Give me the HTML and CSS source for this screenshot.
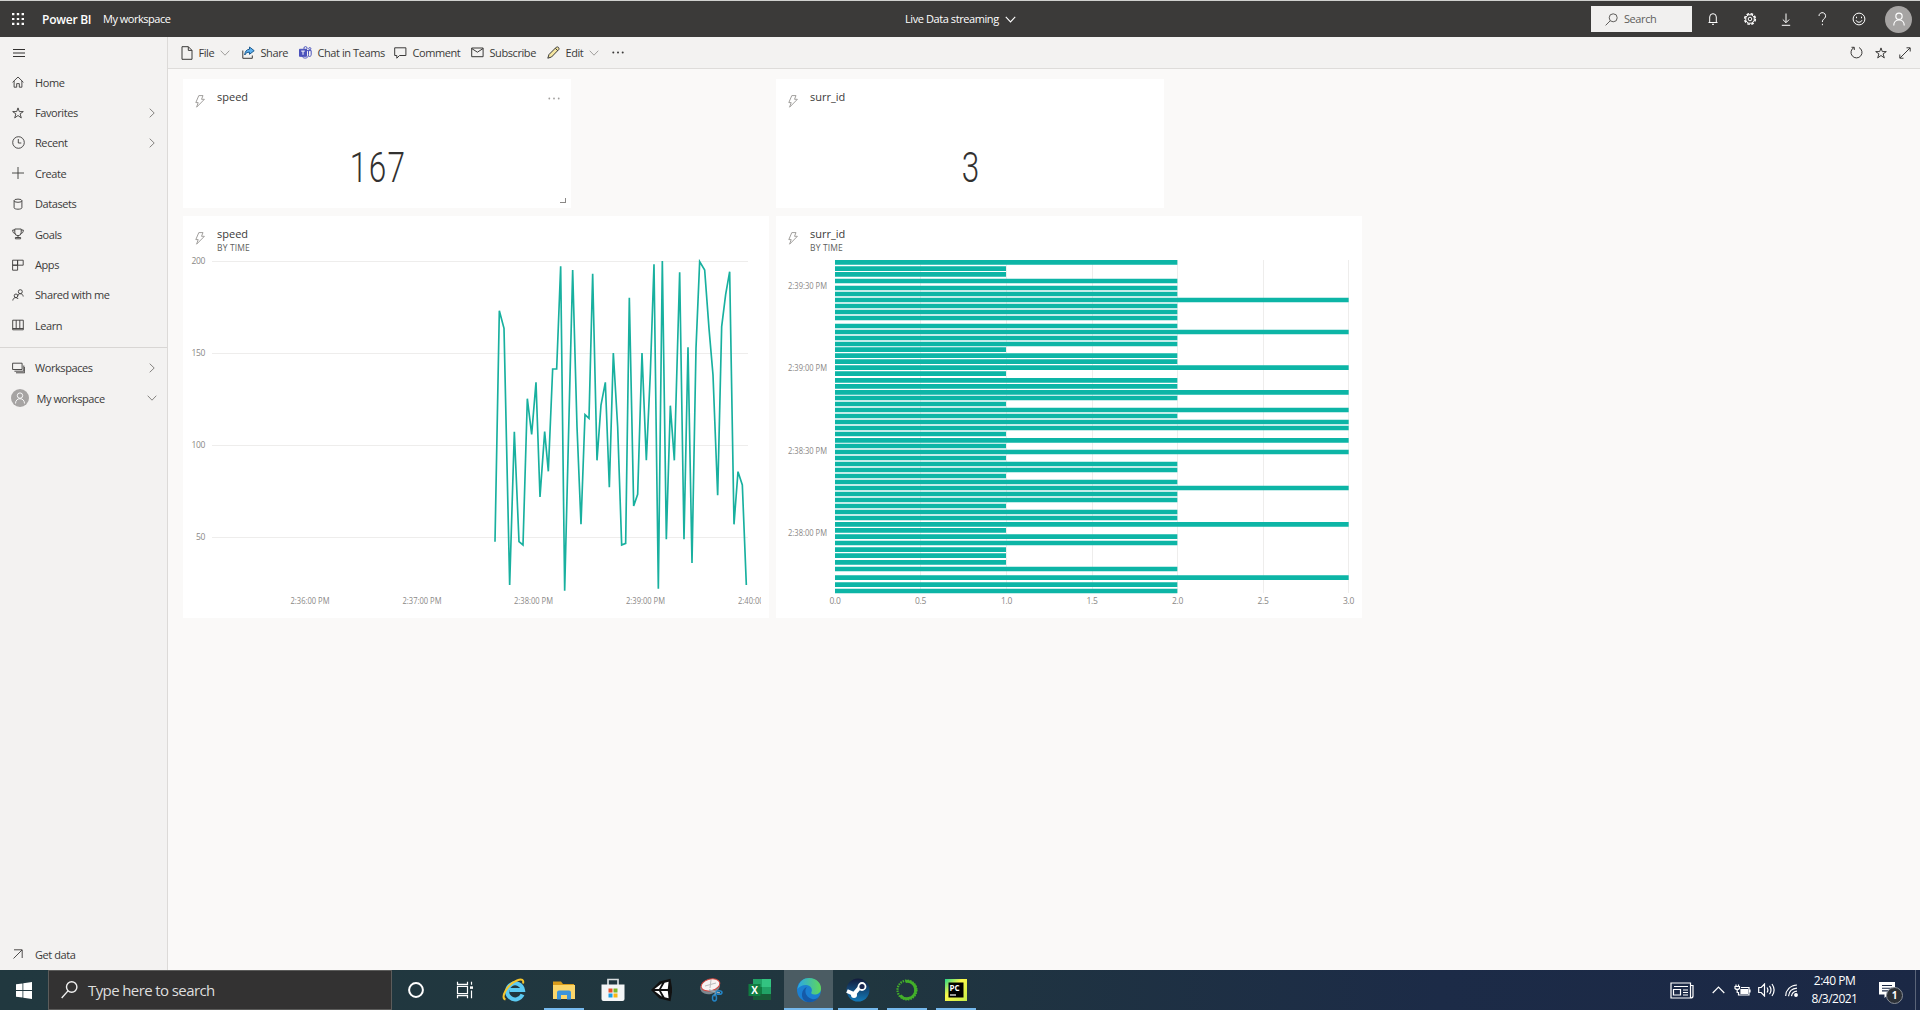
FILE: index.html
```html
<!DOCTYPE html>
<html lang="en">
<head>
<meta charset="utf-8">
<title>Live Data streaming - Power BI</title>
<link rel="stylesheet" href="styles.css">
</head>
<body>
<svg class="defs" width="0" height="0">
  <symbol id="chev-r" viewBox="0 0 6 10"><path d="M.7.7 5.2 5 .7 9.3"/></symbol>
  <symbol id="chev-d" viewBox="0 0 10 6"><path d="M.7.7 5 5.2 9.3.7"/></symbol>
  <symbol id="star" viewBox="0 0 12 12"><path d="M6 .9 7.3 4.6h4L8.100 6.900 9.300 10.900 6 8.500 2.700 10.900 3.900 6.900.7 4.600h4z"/></symbol>
  <symbol id="bolt" viewBox="0 0 10 13"><path d="M3.800.6h4.200L6.500 4.300h2.900L1.600 12.200 3.200 7.600H.8z"/></symbol>
  <symbol id="person" viewBox="0 0 12 12"><circle cx="6" cy="3.600" r="2.700"/><path d="M1.500 11.500c0-3 2-4.800 4.500-4.800s4.500 1.800 4.500 4.800"/></symbol>
</svg>
<div class="app">
  <header class="top">
    <svg class="waffle" width="12" height="12" viewBox="0 0 12 12"><path d="M0 1.200h12M0 6h12M0 10.800h12"/></svg>
    <b class="brand">Power BI</b>
    <span class="crumb">My workspace</span>
    <div class="title"><span>Live Data streaming</span><svg class="ic" width="11" height="7"><use href="#chev-d"/></svg></div>
    <div class="search"><svg class="ic" width="13" height="13" viewBox="0 0 13 13"><circle cx="8.200" cy="4.800" r="4"/><path d="M5.300 7.700.6 12.400"/></svg><span>Search</span></div>
    <div class="actions">
      <svg class="ic" width="12" height="14" viewBox="0 0 12 14"><path d="M1.500 10.500h9M2.700 10.500V5a3.300 3.300 0 0 1 6.600 0v5.500M5 12.300h2"/></svg>
      <svg class="ic" width="14" height="14" viewBox="0 0 14 14"><circle cx="7" cy="7" r="5.300" stroke-width="1.600" stroke-dasharray="2.600 1.560"/><circle cx="7" cy="7" r="4.300"/><circle cx="7" cy="7" r="1.800"/></svg>
      <svg class="ic" width="10" height="13" viewBox="0 0 10 13"><path d="M5 .5v9M1.800 6.500 5 9.700 8.200 6.500M.8 12.300h8.400"/></svg>
      <svg class="ic" width="9" height="14" viewBox="0 0 9 14"><path d="M1 4a3.300 3.300 0 1 1 5.600 2.300C5 7.600 4.400 8.200 4.400 10M4.400 11.800v1.400"/></svg>
      <svg class="ic" width="14" height="14" viewBox="0 0 14 14"><circle cx="7" cy="7" r="5.900"/><path d="M4 8.200a3.200 3.200 0 0 0 6 0M4.500 4.700v1.500M9.500 4.700v1.500"/></svg>
    </div>
    <div class="avatar big"><svg class="ic" width="14" height="14"><use href="#person"/></svg></div>
  </header>
  <div class="body">
    <nav class="side">
      <svg class="burger" width="12" height="8" viewBox="0 0 12 8"><path d="M0 .5h12M0 4h12M0 7.500h12"/></svg>
      <ul>
        <li><svg class="ic" width="12" height="12" viewBox="0 0 12 12"><path d="M.6 6.300 6 1l5.400 5.300M2.100 5v6.200h2.600V7.600h2.600v3.600h2.600V5"/></svg><span>Home</span></li>
        <li><svg class="ic" width="12" height="12"><use href="#star"/></svg><span>Favorites</span><svg class="ic go" width="6" height="10"><use href="#chev-r"/></svg></li>
        <li><svg class="ic" width="13" height="13" viewBox="0 0 13 13"><circle cx="6.500" cy="6.500" r="5.800"/><path d="M6.300 3v4h3"/></svg><span>Recent</span><svg class="ic go" width="6" height="10"><use href="#chev-r"/></svg></li>
        <li><svg class="ic" width="12" height="12" viewBox="0 0 12 12"><path d="M0 6h12M6 0v12"/></svg><span>Create</span></li>
        <li><svg class="ic" width="12" height="12" viewBox="0 0 12 12"><ellipse cx="6" cy="2.700" rx="3.900" ry="1.600"/><path d="M2.100 2.700v7c0 2 7.800 2 7.800 0v-7"/></svg><span>Datasets</span></li>
        <li><svg class="ic" width="12" height="12" viewBox="0 0 12 12"><path d="M2.800 1h6.400v3.500a3.200 3.200 0 0 1-6.400 0zM2.800 2H.7c0 2.500.8 3.200 2.400 3.400M9.200 2h2.100c0 2.500-.8 3.200-2.400 3.400M6 7.700v2M3.400 10.800V9.500h5.200v1.300z"/></svg><span>Goals</span></li>
        <li><svg class="ic" width="12" height="12" viewBox="0 0 12 12"><path d="M.6 1.200h5v5h-5zM5.600 1.200h5.600v5H5.600zM.6 6.200h5v5h-5z"/></svg><span>Apps</span></li>
        <li><svg class="ic" width="12" height="12" viewBox="0 0 12 12"><circle cx="8.300" cy="2.700" r="2"/><path d="M5.700 7.200c.2-1.700 1-2.500 2.600-2.500s2.700 1 2.900 2.800"/><circle cx="4" cy="6.800" r="1.800"/><path d="M.8 11.500c.3-2 1.400-2.900 3-2.900 1 0 1.900.5 2.400 1.400"/></svg><span>Shared with me</span></li>
        <li><svg class="ic" width="12" height="12" viewBox="0 0 12 12"><path d="M.7 1.200h10.600v9.600H.7zM4.200 1.200v8.300M7.800 1.200v8.300M.7 9.500h10.600"/></svg><span>Learn</span></li>
      </ul>
      <ul class="ws">
        <li><svg class="ic" width="13" height="12" viewBox="0 0 13 12"><path d="M.6 1.200h9.500v6.300H.6zM2.400 9.200h9.400V3.500M4 10.800h8.700V5"/></svg><span>Workspaces</span><svg class="ic go" width="6" height="10"><use href="#chev-r"/></svg></li>
        <li class="mine"><div class="avatar"><svg class="ic" width="12" height="12"><use href="#person"/></svg></div><span>My workspace</span><svg class="ic go" width="10" height="6"><use href="#chev-d"/></svg></li>
      </ul>
      <div class="getdata"><svg class="ic" width="10" height="10" viewBox="0 0 10 10"><path d="M.5 9.500 9 1M1 .8h8.200V9"/></svg><span>Get data</span></div>
    </nav>
    <main>
      <div class="toolbar">
        <div class="cmd w-file"><svg class="ic" width="12" height="14" viewBox="0 0 12 14"><path d="M1 .7h6.300L11 4.400v8.900H1zM7.300.7v3.700H11"/></svg><span>File</span><svg class="ic dim" width="10" height="6"><use href="#chev-d"/></svg></div>
        <div class="cmd w-share"><svg class="ic" width="13" height="13" viewBox="0 0 13 13"><path d="M.8 4.500v7.800h9.500V9.500"/><path d="M7.500 1 12.200 4.700 7.500 8.300V6.200C5 6.200 4 7 2.700 9 3 5.500 4.500 3.500 7.500 3.200z" fill="#5fb0ee" stroke="#1b5a8e"/></svg><span>Share</span></div>
        <div class="cmd w-teams"><svg class="ic" width="13" height="13" viewBox="0 0 13 13" stroke="#4b53bc"><circle cx="6.500" cy="2.200" r="1.600"/><circle cx="10.800" cy="2.700" r="1.100"/><path d="M7.500 4.600h4.700v4.200c0 1.500-1.500 1.900-2.300 1.500M3 10c.8 3 6.600 3 6.500-1.300V4.600"/><path d="M.5 3.300h7v7h-7z" fill="#4b53bc"/><path d="M2.200 5.100h3.600M4 5.100v3.700" stroke="#fff"/></svg><span>Chat in Teams</span></div>
        <div class="cmd w-comment"><svg class="ic" width="13" height="12" viewBox="0 0 13 12"><path d="M.7.8h11.200v7.700H5.500l-2.700 2.700V8.500H.7z"/></svg><span>Comment</span></div>
        <div class="cmd w-sub"><svg class="ic" width="13" height="11" viewBox="0 0 13 11"><path d="M.7 1h11.400v8.700H.7zM.7 1.500l5.700 3.700 5.700-3.700"/></svg><span>Subscribe</span></div>
        <div class="cmd w-edit"><svg class="ic" width="13" height="13" viewBox="0 0 13 13"><path d="M.8 12.200 2 8.500 9.300 1.200c1.700-1 3.300.8 2.500 2.300L4.500 11z" fill="#f5e6a0"/><path d="M8.300 2.300 10.800 4.700"/></svg><span>Edit</span><svg class="ic dim" width="10" height="6"><use href="#chev-d"/></svg></div>
        <svg class="more" width="12" height="3" viewBox="0 0 12 3"><circle cx="1.300" cy="1.500" r="1"/><circle cx="6" cy="1.500" r="1"/><circle cx="10.700" cy="1.500" r="1"/></svg>
        <div class="view">
          <svg class="ic" width="13" height="13" viewBox="0 0 13 13"><path d="M4 1.500A5.500 5.500 0 1 0 9 1.500M1.500 1.300h2.800V4"/></svg>
          <svg class="ic" width="12" height="12"><use href="#star"/></svg>
          <svg class="ic" width="12" height="12" viewBox="0 0 12 12"><path d="M1 11 11 1M7.500.8h3.700v3.700M.8 7.500v3.700h3.700"/></svg>
        </div>
      </div>
      <div class="board">
        <section class="tile card">
          <div class="head"><svg class="bolt" width="10" height="13"><use href="#bolt"/></svg><div><h2>speed</h2></div>
            <svg class="dots" width="12" height="3" viewBox="0 0 12 3"><circle cx="1.300" cy="1.500" r=".9"/><circle cx="6" cy="1.500" r=".9"/><circle cx="10.700" cy="1.500" r=".9"/></svg></div>
          <div class="big-number">167</div>
          <i class="grip"></i>
        </section>
        <section class="tile card">
          <div class="head"><svg class="bolt" width="10" height="13"><use href="#bolt"/></svg><div><h2>surr_id</h2></div></div>
          <div class="big-number">3</div>
        </section>
        <section class="tile chart">
          <div class="head"><svg class="bolt" width="10" height="13"><use href="#bolt"/></svg><div><h2>speed</h2><h3>BY TIME</h3></div></div>
          <svg class="plot" width="586" height="361" viewBox="183 257 586 361">
            <path class="grid" d="M212 261.500H748M212 353.500H748M212 445.500H748M212 537.500H748"/>
            <g class="axis">
              <text x="191.500" y="264" textLength="13.500">200</text><text x="191.500" y="356" textLength="13.500">150</text><text x="191.500" y="448" textLength="13.500">100</text><text x="196" y="540" textLength="9">50</text>
            </g>
            <g class="axis time">
              <text x="290.500" y="604" textLength="39" lengthAdjust="spacingAndGlyphs">2:36:00 PM</text><text x="402.500" y="604" textLength="39" lengthAdjust="spacingAndGlyphs">2:37:00 PM</text><text x="514" y="604" textLength="39" lengthAdjust="spacingAndGlyphs">2:38:00 PM</text><text x="626" y="604" textLength="39" lengthAdjust="spacingAndGlyphs">2:39:00 PM</text>
              <svg x="738" y="590" width="23" height="20"><text x="0" y="14" textLength="39" lengthAdjust="spacingAndGlyphs">2:40:00 PM</text></svg>
            </g>
            <polyline class="line" transform="translate(480 240) scale(.33333)" points="45,905 58,212 72,265 89,1035 103,575 117,905 129,915 142,476 155,583 168,427 180,771 194,575 205,694 218,387 230,387 242,79 254,1052 278,90 291,560 303,853 315,524 327,535 338,101 351,661 363,495 376,427 388,742 400,339 413,560 425,915 437,910 448,173 461,798 473,763 486,339 499,661 511,400 522,73 535,1046 547,63 559,898 571,497 583,661 599,97 612,898 624,322 636,969 648,325 659,65 674,90 687,265 699,405 713,766 725,260 737,163 749,95 762,853 774,695 787,735 799,1035"/>
          </svg>
        </section>
        <section class="tile chart">
          <div class="head"><svg class="bolt" width="10" height="13"><use href="#bolt"/></svg><div><h2>surr_id</h2><h3>BY TIME</h3></div></div>
          <svg class="plot" width="586" height="361" viewBox="776 257 586 361">
            <path class="grid" d="M920.500 260V593M1006.500 260V593M1092.500 260V593M1177.500 260V593M1263.500 260V593M1348.500 260V593"/>
            <g class="axis time">
              <text x="788" y="289" textLength="39" lengthAdjust="spacingAndGlyphs">2:39:30 PM</text><text x="788" y="371" textLength="39" lengthAdjust="spacingAndGlyphs">2:39:00 PM</text><text x="788" y="454" textLength="39" lengthAdjust="spacingAndGlyphs">2:38:30 PM</text><text x="788" y="536" textLength="39" lengthAdjust="spacingAndGlyphs">2:38:00 PM</text>
            </g>
            <g class="axis" text-anchor="middle">
              <text x="835" y="604">0.0</text><text x="920.500" y="604">0.5</text><text x="1006.500" y="604">1.0</text><text x="1092" y="604">1.5</text><text x="1177.500" y="604">2.0</text><text x="1263" y="604">2.5</text><text x="1348.500" y="604">3.0</text>
            </g>
            <g class="bars" transform="translate(770 250) scale(.33333)">
              <path d="M195 56H708M195 73H708M195 299H708M195 371H708M195 462H708M195 552H708M195 588H708M195 624H708M195 678H708M195 768H708M195 841H708M195 899H708M195 917H708M195 937H708"/>
              <path d="M195 37H1222M195 93H1222M195 114H1222M195 132H1222M195 168H1222M195 186H1222M195 204H1222M195 228H1222M195 264H1222M195 282H1222M195 317H1222M195 335H1222M195 391H1222M195 409H1222M195 444H1222M195 498H1222M195 642H1222M195 660H1222M195 696H1222M195 732H1222M195 750H1222M195 786H1222M195 804H1222M195 860H1222M195 879H1222M195 957H1222M195 1004H1222M195 1023H1222"/>
              <path d="M195 150H1736M195 246H1736M195 353H1736M195 427H1736M195 480H1736M195 516H1736M195 534H1736M195 571H1736M195 606H1736M195 714H1736M195 823H1736M195 983H1736"/>
            </g>
          </svg>
        </section>
      </div>
    </main>
  </div>
  <footer class="taskbar">
    <div class="start"><svg width="16" height="17" viewBox="0 0 16 17" fill="#fff"><path d="M0 2.300 6.500 1.400v6.700H0zM7.300 1.300 16 0v8.100H7.300zM0 8.900h6.500v6.700L0 14.700zM7.300 8.900H16V17l-8.700-1.300z"/></svg></div>
    <div class="find"><svg width="17" height="18" viewBox="0 0 17 18"><circle cx="10.700" cy="6" r="5.200"/><path d="M7 9.900.7 17"/></svg><span>Type here to search</span></div>
    <div class="apps">
      <div class="app-btn"><svg width="18" height="18" viewBox="0 0 18 18"><circle cx="9" cy="9" r="6.900" fill="none" stroke="#fff" stroke-width="2"/></svg></div>
      <div class="app-btn"><svg width="18" height="18" viewBox="0 0 18 18" fill="none" stroke="#fff" stroke-width="1.200"><path d="M1.500.8v2.600h10V.8M1.500 17.200v-2.600h10v2.600M1.500 5.300h10v7.400h-10zM15.500.8v3M15.500 9.500v7.700"/><path d="M14 6.600h3" stroke-width="2.500"/></svg></div>
      <div class="app-btn wide"><svg width="24" height="24" viewBox="0 0 24 24"><path d="M20.500 16.500A8 8 0 1 1 21 12H7.500" fill="none" stroke="#5ccbf3" stroke-width="4"/><path d="M3.500 21.500C-2 20 5 6.500 15 2.500c5-2 7-.5 6 3" fill="none" stroke="#f6c52c" stroke-width="2"/></svg></div>
      <div class="app-btn open"><svg width="24" height="22" viewBox="0 0 24 22"><path d="M1 2.500h8l2 2.500h11v6H1z" fill="#d99c1b"/><path d="M1 6h22v14H1z" fill="#fbd66a"/><path d="M5 20.500v-7q0-2 2-2h10q2 0 2 2v7h-4V16H9v4.500z" fill="#3b94dc"/></svg></div>
      <div class="app-btn"><svg width="24" height="24" viewBox="0 0 24 24"><path d="M7 8V1.500h10V8" fill="none" stroke="#d8dde0" stroke-width="1.700"/><path d="M.5 6.500h23V21q0 2-2 2h-19q-2 0-2-2z" fill="#f4f6f7"/><path d="M7.500 10.500h4v4h-4z" fill="#e8502b"/><path d="M12.500 10.500h4v4h-4z" fill="#7db726"/><path d="M7.500 15.500h4v4h-4z" fill="#1a9fe6"/><path d="M12.500 15.500h4v4h-4z" fill="#f9b713"/></svg></div>
      <div class="app-btn"><svg width="24" height="24" viewBox="0 0 24 24"><path d="M1 12 9.500 3.500 20.500.8l1.500 9v4.400l-1.500 9-11-2.700z" fill="#111"/><path d="m5 11 7.500-5.800-3 5.800zM5 13l7.500 5.800-3-5.800zM11.500 11l3.600-6.200 4-1-.8 7.200zM11.500 13l3.600 6.200 4 1-.8-7.200z" fill="#fff" transform="translate(-.5)"/></svg></div>
      <div class="app-btn"><svg width="24" height="24" viewBox="0 0 24 24"><ellipse cx="11" cy="9" rx="10" ry="7" fill="#7d8890" transform="rotate(-15 11 9)"/><ellipse cx="11.500" cy="7" rx="9.500" ry="5.800" fill="#f7f3f2" stroke="#d5463f" transform="rotate(-15 11 7)"/><path d="m6 8 11-3M12 2l-1 8" stroke="#bbb"/><path d="m10 12 7 2 4 1M18 13l-3 5" stroke="#9eabb3" stroke-width="1.500"/><g fill="none" stroke="#2384c6" stroke-width="1.500"><ellipse cx="20" cy="14.500" rx="3" ry="1.800"/><ellipse cx="15.500" cy="20" rx="2" ry="3"/></g></svg></div>
      <div class="app-btn"><svg width="24" height="24" viewBox="0 0 24 24"><path d="M5 1h9v8H5z" fill="#21a366"/><path d="M14 1h9v8h-9z" fill="#33c481"/><path d="M5 9h9v7H5z" fill="#107c41"/><path d="M14 9h9v7h-9z" fill="#21a366"/><path d="M5 16h18v6H5z" fill="#185c37"/><path d="M.5 6h12v12H.5z" fill="#107c41"/><text x="6.500" y="16" text-anchor="middle" class="glyph xl">X</text></svg></div>
      <div class="app-btn active"><svg width="26" height="26" viewBox="0 0 26 26"><defs><linearGradient id="eg" x1="0" x2="1"><stop stop-color="#2aa7e6"/><stop offset="1" stop-color="#5fd85a"/></linearGradient></defs><circle cx="13" cy="13" r="12" fill="#1b7fd1"/><path d="M1.500 12C3 4 8 1 13 1c8 0 12 5.500 12 10.500 0 4-3 6-6.500 6-2.500 0-4-1-3-2.500C17 12 14.500 8 10 8 6 8 3 10 1.500 12z" fill="url(#eg)"/><path d="M11 10c-3 3-2 10 5 12 3 .8 6-1 7.500-3C20 25 14 26 10 24.600 4 22 5 12 11 10z" fill="#155aa8"/></svg></div>
      <div class="app-btn open"><svg width="24" height="24" viewBox="0 0 24 24"><defs><linearGradient id="sg" y2="1" x2="0"><stop stop-color="#131a3b"/><stop offset="1" stop-color="#1379b8"/></linearGradient></defs><circle cx="12" cy="12" r="11.500" fill="url(#sg)"/><path d="m1 13 7 3 6-7" fill="none" stroke="#fff" stroke-width="4"/><circle cx="8" cy="17" r="3" fill="#fff"/><circle cx="16" cy="8.500" r="3.500" fill="#1c2850" stroke="#fff" stroke-width="1.800"/></svg></div>
      <div class="app-btn running"><svg width="24" height="24" viewBox="0 0 24 24" fill="none" stroke="#43b02a"><circle cx="12" cy="12" r="8.600" stroke-width="2.800" stroke-dasharray="36 18" transform="rotate(-100 12 12)"/><circle cx="12" cy="12" r="9.500" stroke-width="2.200" stroke-dasharray="1.500 1"/></svg></div>
      <div class="app-btn running"><svg width="22" height="22" viewBox="0 0 22 22"><defs><linearGradient id="pg" y2="1"><stop stop-color="#21d789"/><stop offset=".4" stop-color="#fcf84a"/><stop offset="1" stop-color="#c5ec4a"/></linearGradient></defs><path d="M0 0h22v22H0z" fill="url(#pg)"/><path d="M3.500 3.500h15v15h-15z" fill="#000"/><text x="4.500" y="11.500" class="glyph pc">PC</text><path d="M5 16h6" stroke="#fff" stroke-width="1.200"/></svg></div>
    </div>
    <div class="tray">
      <svg class="news" width="24" height="17" viewBox="0 0 24 17"><path d="M1 1h19.500v15H1zM20.500 3.500H23V14q0 2-2.500 2M4 4.500h14M3.500 7.500h7v5.500h-7zM13 8h5M13 10.500h5M13 13h5"/></svg>
      <svg class="up" width="13" height="8" viewBox="0 0 13 8"><path d="M.7 7 6.500 1.200 12.300 7"/></svg>
      <svg class="bat" width="17" height="12" viewBox="0 0 17 12"><path d="M7 3.500h8v7.500H4.500V8M16 5.500v3M1 2.500h4.500v2q-2.200 2-4.500 0zM2 .5v2M4.500.5v2M3.200 6v3"/><path d="M7 5.500h6.500v4H7z" fill="#fff"/></svg>
      <svg class="vol" width="17" height="14" viewBox="0 0 17 14"><path d="M.7 4.500h2.500L6.500 1v12L3.200 9.500H.7zM9 4.500q1.800 2.500 0 5M11.500 2.800q3 4.200 0 8.400M14 1q4.200 6 0 12"/></svg>
      <svg class="wifi" width="13" height="13" viewBox="0 0 13 13"><path d="M.7 12C1 6 5 1.500 12 1M3.500 12.200C4 7.500 7 4.500 12 4.200M6.500 12.200C7 9 9 7.300 12 7.200"/><circle cx="11" cy="11" r="1.300" fill="#fff"/></svg>
      <div class="clock"><span>2:40 PM</span><span>8/3/2021</span></div>
      <div class="notes"><svg width="17" height="17" viewBox="0 0 17 17"><path d="M0 0h16v12.500H9L5.500 16v-3.500H0z" fill="#fff"/><path d="M3 3.500h10M3 6.200h10M3 8.900h6" stroke="#1b2845" stroke-width="1.100"/></svg><b class="badge">1</b></div>
      <i class="peek"></i>
    </div>
  </footer>
</div>
</body>
</html>
```
FILE: styles.css
```css
* { box-sizing: border-box; }
body { margin: 0; font-family: "Open Sans", "Noto Sans", sans-serif; font-size: 11px; letter-spacing: -0.42px; color: #3b3a39; background: #faf9f8; }
svg { display: block; flex: none; }
.defs { position: absolute; }
ul { list-style: none; margin: 0; padding: 0; }
h2, h3 { margin: 0; font-weight: 400; }
span, h2, h3 { white-space: nowrap; }
.app { display: flex; flex-direction: column; width: 1920px; height: 1010px; overflow: hidden; }
.ic { fill: none; stroke: currentColor; stroke-width: 1; }
.ic[stroke] { stroke: #4b53bc; }

.top { display: grid; grid-template-columns: 42px 61px 802px 686px 101px 193px 35px; align-items: center; height: 37px; border-top: 1px solid #d0d0ce; background: #3b3a39; color: #fff; }
.waffle { margin-left: 12px; stroke: #fff; stroke-width: 2.200; stroke-dasharray: 2.400; }
.brand { font-size: 12px; font-weight: 600; letter-spacing: -0.250px; }
.title { display: flex; align-items: center; gap: 6px; }
.crumb, .title span { position: relative; top: -1px; }
.crumb { letter-spacing: -0.480px; }
.search { display: flex; align-items: center; gap: 6px; height: 26px; padding-left: 14px; background: #f1f0ef; color: #605e5c; }
.search span { position: relative; top: -1px; }
.actions { display: grid; grid-template-columns: repeat(5, 36.400px); justify-items: center; align-items: center; padding-left: 3px; }
.avatar { display: flex; align-items: center; justify-content: center; width: 18px; height: 18px; border-radius: 50%; background: #a6a4a3; color: #fff; }
.avatar.big { width: 27px; height: 27px; }

.body { display: flex; flex: 1; min-height: 0; }
.side { display: flex; flex-direction: column; width: 168px; border-right: 1px solid #dcdad8; background: #f3f2f1; }
.burger { margin: 12px 0 10px 13px; stroke: #323130; stroke-width: 1.200; }
.side li { display: grid; grid-template-columns: 23px 1fr 12px; align-items: center; height: 30.400px; padding: 0 9px 0 12px; }
.side .ic { stroke-width: .9; }
.go { justify-self: center; color: #797775; }
.ws { border-top: 1px solid #d8d6d4; margin-top: 6px; padding-top: 5px; }
.side li.mine { padding-left: 11px; grid-template-columns: 25.500px 1fr 12px; }
.getdata { display: flex; gap: 12px; align-items: center; margin-top: auto; height: 32px; padding-left: 13px; }

main { display: flex; flex-direction: column; flex: 1; }
.toolbar { display: flex; align-items: center; height: 32px; padding: 0 13px; background: #f3f2f1; border-bottom: 1px solid #dedcda; }
.cmd { display: flex; align-items: center; gap: 5.500px; }
.w-file { width: 61px; }
.w-share { width: 57px; }
.w-teams { width: 95px; }
.w-comment { width: 77px; }
.w-sub { width: 76px; }
.w-edit { width: 65px; }
.dim { color: #a19f9d; }
.more, .dots { fill: #3b3a39; }
.view { display: flex; align-items: center; gap: 12px; margin-left: auto; margin-right: -4px; }

.board { display: grid; grid-template-columns: 586px 586px; grid-template-rows: 129px 402px; column-gap: 7px; row-gap: 8px; padding: 10px 0 0 15px; }
.tile { position: relative; background: #fff; }
.card { width: 388px; }
.head { display: flex; height: 41px; padding: 10px 11px 0; }
.head h2 { font-size: 11px; line-height: 15px; letter-spacing: 0; color: #3b3a39; }
.head h3 { font-size: 8.500px; line-height: 13px; letter-spacing: 0.150px; color: #605e5c; }
.bolt { margin: 6px 12px 0 1px; fill: none; stroke: #a19f9d; stroke-width: 1; }
.dots { margin: 8px 0 0 auto; fill: #a19f9d; }
.big-number { font-family: Roboto, sans-serif; font-weight: 300; font-size: 42px; line-height: 50px; letter-spacing: 2px; text-indent: 3px; margin-top: 23px; text-align: center; transform: scaleX(.75); color: #323130; }
.grip { position: absolute; right: 5px; bottom: 5px; width: 6px; height: 5px; border: solid #8a8886; border-width: 0 1px 1px 0; }
.plot { overflow: visible; }
.grid { stroke: #eeedec; fill: none; }
.axis { font-size: 8.500px; fill: #8a8886; letter-spacing: -0.300px; }
.axis.time { letter-spacing: 0; }
.line { fill: none; stroke: #18b09f; stroke-width: 5; }
.bars { stroke: #0db5a6; stroke-width: 14; }

.taskbar { display: flex; height: 40px; background: linear-gradient(90deg, #21383f, #20363f 45%, #1c2b47 75%, #1b2845); color: #fff; }
.start { display: flex; width: 48px; align-items: center; justify-content: center; }
.find { display: flex; align-items: center; gap: 10px; width: 344px; padding-left: 12px; border: 1px solid #5c5c5b; background: #333232; color: #dedede; font-size: 15px; letter-spacing: -0.600px; }
.find svg { fill: none; stroke: #f0f0f0; stroke-width: 1.400; }
.apps { display: flex; margin-left: -1px; }
.app-btn { display: flex; align-items: center; justify-content: center; width: 49px; height: 40px; }
.app-btn.wide { width: 50px; }
.app-btn.open, .app-btn.running, .app-btn.active { background: linear-gradient(#76b9ed, #76b9ed) center bottom / 40px 2px no-repeat; }
.app-btn.active { background: linear-gradient(#76b9ed, #76b9ed) center bottom / 49px 2px no-repeat, #4b5c63; }
.tray { display: flex; align-items: center; margin-left: auto; }
.tray > svg { fill: none; stroke: #fff; stroke-width: 1.200; }
.news { margin-right: 18px; }
.up { margin-right: 9px; }
.bat { margin-right: 7px; }
.vol { margin-right: 10px; }
.clock { display: flex; flex-direction: column; align-items: center; width: 73px; font-size: 12px; line-height: 18px; letter-spacing: -0.500px; }
.notes { position: relative; width: 44px; padding-left: 8px; }
.badge { position: absolute; left: 15px; top: 5px; width: 17px; height: 17px; border: 1px solid #8a8f98; border-radius: 50%; background: #2c3036; font-size: 10px; line-height: 15px; text-align: center; }
.peek { width: 5px; height: 40px; border-left: 1px solid #5a6478; }
.glyph { fill: #fff; font-weight: 700; letter-spacing: 0; }
.xl { font-size: 10px; }
.pc { font-size: 8px; }
```
